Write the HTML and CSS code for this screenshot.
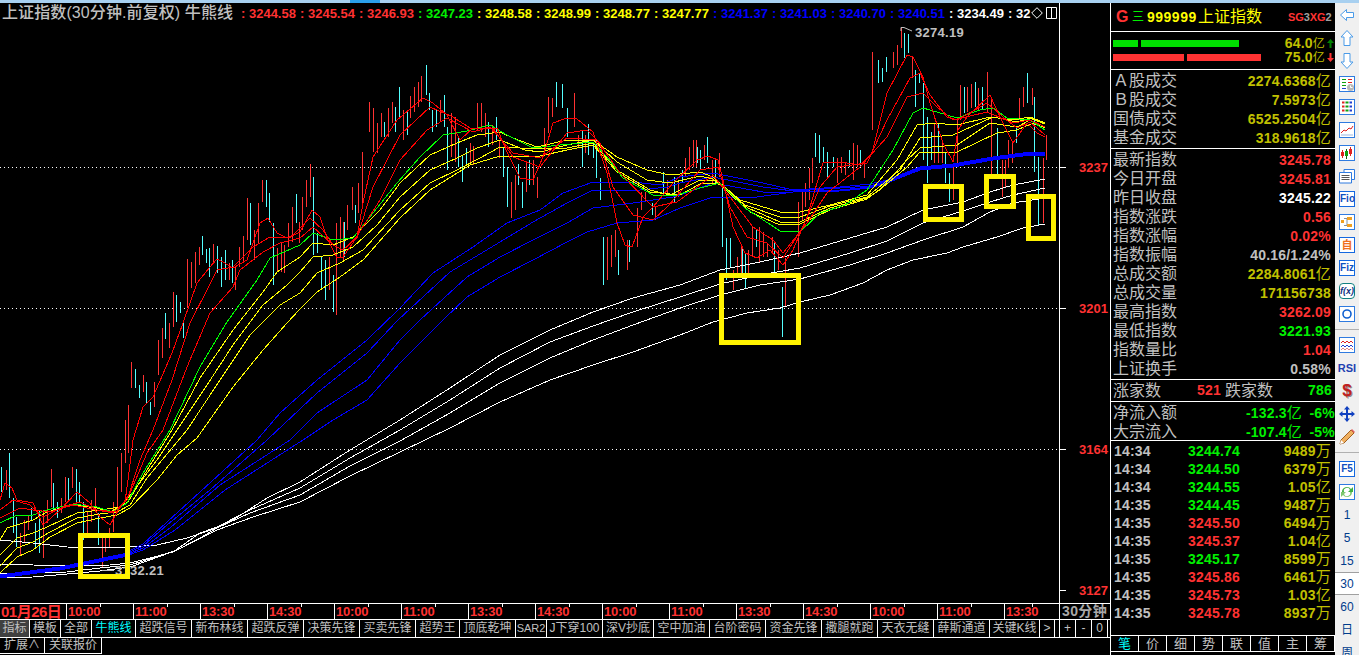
FILE: index.html
```html
<!DOCTYPE HTML>
<html>
    <head>
        <title>上证指数 牛熊线</title>
        <link rel="stylesheet" href="styles.css">
    </head>
    <body>
        <div class="strip"><i></i></div>
        <div class="main">
            <section class="chart">
                <div class="chart-body">
                    <div class="plot">
                        <div class="legend">
                            <span class="title">上证指数(30分钟.前复权) 牛熊线</span>
                            <span class="val red">: 3244.58</span>
                            <span class="val red">: 3245.54</span>
                            <span class="val red">: 3246.93</span>
                            <span class="val green">: 3247.23</span>
                            <span class="val yellow">: 3248.58</span>
                            <span class="val yellow">: 3248.99</span>
                            <span class="val yellow">: 3248.77</span>
                            <span class="val yellow">: 3247.77</span>
                            <span class="val blue">: 3241.37</span>
                            <span class="val blue">: 3241.03</span>
                            <span class="val blue">: 3240.70</span>
                            <span class="val blue">: 3240.51</span>
                            <span class="val white">: 3234.49</span>
                            <span class="val-end white">: 32</span>
                            <svg class="legend-icon" width="12" height="12" viewBox="0 0 12 12"><path d="M6 .7L11.3 6 6 11.3.7 6Z" fill="none" stroke="#fff"/></svg>
                            <svg class="legend-icon" width="11" height="12" viewBox="0 0 11 12"><path d="M.5.5H10.5V11.5H.5ZM5.5.5V11.5" fill="none" stroke="#fff"/></svg>
                        </div>
                        <svg class="canvas" width="1059" height="580" viewBox="0 23 1059 580">
                            <path class="dots" d="M0 167.5H1059M0 308.5H1059M0 449.5H1059"/>
                            <g transform="translate(.5 0)">
                                <path class="bar-red" d="M6 470V490M20 533V556M24 520V542M28 515V530M43 510V558M47 500V523M51 469V507M61 498V513M65 477V502M72 467V488M87 512V533M91 500V522M95 488V510M102 538V568M105 538V552M109 528V548M113 502V532M117 467V510M121 453V492M125 420V463M128 405V453M131 362V388M143 375V392M154 382V407M158 340V375M162 328V358M169 323V348M173 292V327M187 259V308M191 262V288M195 252V283M199 247V265M213 244V263M229 263V280M235 267V290M239 247V267M243 236V263M247 198V240M254 230V260M258 203V243M262 180V202M277 248V272M281 243V272M284 245V273M288 223V247M292 207V242M299 222V243M302 197V230M306 180V207M310 164V197M329 257V290M336 223V315M340 217V258M343 222V260M347 205V230M352 187V210M358 183V213M362 152V203M369 102V132M373 108V152M377 123V153M381 113V137M388 108V137M392 102V123M403 110V140M410 96V118M414 87V112M418 82V107M421 76V102M440 100V122M451 113V157M455 117V162M470 143V162M473 146V165M477 103V130M481 103V132M485 113V137M492 125V145M499 140V158M511 182V218M515 175V210M526 163V192M533 160V185M537 177V198M544 128V153M548 97V133M552 98V117M574 93V127M578 135V147M585 135V153M607 237V280M611 235V267M615 230V257M627 240V270M637 208V247M641 192V210M645 192V202M655 207V220M667 180V193M678 180V197M685 158V177M689 147V170M693 140V167M696 140V167M704 145V160M712 160V183M719 153V177M733 270V290M737 257V277M741 247V273M748 250V273M752 226V257M759 227V263M763 232V257M767 243V257M772 237V253M778 250V270M785 258V307M798 202V257M802 192V220M805 183V207M809 168V200M812 158V183M837 158V183M841 157V173M845 163V175M853 143V180M857 145V167M864 163V178M872 52V130M893 52V68M897 45V65M901 27V48M912 57V78M934 123V163M938 123V163M942 143V163M953 167V200M957 117V167M960 85V120M967 87V112M971 84V108M978 88V110M987 72V112M991 98V175M1002 160V197M1005 160V188M1008 140V168M1012 143V163M1019 98V120M1023 87V107M1032 88V105M1043 158V223M1046 135V160"/>
                                <path class="bar-cyan" d="M1 467V492M9 453V498M13 498V533M16 517V547M31 508V520M35 523V547M39 510V553M53 483V512M57 502V518M68 478V502M76 469V502M79 482V503M83 502V540M98 513V545M135 369V388M139 385V398M146 382V403M150 402V415M165 313V339M176 295V322M180 302V313M183 320V338M202 236V255M206 249V263M209 248V277M217 246V273M221 257V287M225 250V280M232 260V283M250 203V245M266 180V207M269 193V222M273 223V285M296 194V223M313 177V255M317 233V253M321 257V290M325 260V300M333 275V312M344 222V257M355 205V223M384 122V137M395 107V132M399 87V117M407 110V135M426 65V95M429 93V110M432 110V132M436 110V127M444 95V127M447 127V170M458 137V167M462 155V182M466 148V165M488 122V147M496 117V140M503 147V177M507 167V207M518 164V185M522 182V208M529 160V185M556 82V107M562 84V108M567 108V137M582 130V167M588 124V155M593 143V158M596 140V178M600 178V200M603 237V285M618 250V275M629 240V262M652 203V215M663 172V193M674 177V203M682 170V183M697 147V163M700 150V170M707 137V163M715 160V183M722 185V247M726 238V280M730 238V267M742 247V277M745 253V288M756 230V247M774 243V273M782 287V337M815 133V157M819 135V163M823 147V163M827 152V177M833 157V167M849 150V167M860 150V167M878 60V83M882 68V82M886 57V72M904 33V58M908 34V53M915 70V107M919 73V83M923 83V160M927 117V183M931 132V160M938 123V153M945 153V183M949 173V202M964 87V113M975 82V107M982 87V110M997 128V175M1016 127V143M1027 73V103M1034 97V172M1038 157V225"/>
                            </g>
                            <polyline class="ln ln-white" points="0,540 33,543 67,547 110,548 130,547 157,545 187,538 217,528 233,520 267,498 300,482 350,450 400,420 450,388 500,355 550,330 593,312 633,298 680,285 720,270 760,262 800,253 850,238 887,227 923,210 963,202 990,192 1013,185 1045,179"/>
                            <polyline class="ln ln-white" points="0,564 33,565 67,566 110,565 130,563 150,558 173,552 200,533 217,527 250,510 300,488 350,458 400,430 450,400 500,368 550,342 593,326 633,312 680,297 720,284 760,275 800,268 850,253 887,241 923,223 963,211 990,202 1013,195 1045,188"/>
                            <polyline class="ln ln-white" points="0,574 33,573 67,572 100,568 130,565 153,558 177,550 200,538 217,528 250,513 300,495 350,466 400,441 450,413 500,383 550,358 593,340 633,325 680,308 720,295 760,285 800,279 850,265 887,253 923,240 963,227 990,212 1013,203 1045,198"/>
                            <polyline class="ln ln-white" points="0,578 33,577 67,574 100,571 130,567 150,560 177,550 217,530 253,517 300,502 350,476 400,452 450,428 500,402 550,380 593,365 633,352 680,335 713,322 747,313 780,308 800,302 830,295 863,283 887,270 913,260 947,253 963,247 997,237 1023,228 1045,224"/>
                            <polyline class="ln ln-blue" points="0,575 60,567 123,554 143,544 167,522 200,492 257,440 280,413 317,380 367,340 400,308 433,273 473,247 507,223 540,210 563,193 593,182 633,182 660,185 680,177 713,173 763,183 793,190 840,187 870,184 887,180 920,167 953,164 993,157 1030,152 1045,152"/>
                            <polyline class="ln ln-blue" points="0,576 60,568 123,555 143,546 167,525 210,490 267,440 317,393 367,353 398,320 450,272 500,242 533,222 567,203 593,190 640,190 667,187 680,183 713,177 763,187 793,191 840,188 870,186 887,181 920,168 953,165 993,158 1030,153 1045,153"/>
                            <polyline class="ln ln-blue" points="0,577 60,569 123,556 143,548 170,528 220,485 290,440 317,413 367,380 400,340 420,320 467,277 500,257 533,240 567,223 593,208 633,203 673,197 680,195 713,183 763,192 793,192 840,190 870,187 887,182 920,169 953,166 993,159 1030,154 1045,154"/>
                            <polyline class="ln ln-blue" points="0,578 60,570 123,557 143,550 175,530 225,490 303,440 333,420 367,400 400,363 443,320 467,297 500,277 533,260 567,242 587,232 617,223 653,220 680,208 713,197 757,197 793,192 840,191 870,188 887,183 920,170 953,167 993,160 1030,155 1045,155"/>
                            <polyline class="ln ln-yellow" points="0,573 17,557 33,550 50,537 77,523 100,518 117,515 130,508 157,480 177,455 197,438 233,387 263,350 287,323 300,309 317,292 340,277 363,260 400,218 430,190 470,165 500,156 540,156 567,150 593,145 617,172 650,192 680,195 700,184 718,183 750,212 780,225 800,224 830,210 867,199 883,187 907,167 920,152 957,152 997,133 1017,130 1033,123 1045,128"/>
                            <polyline class="ln ln-yellow" points="0,566 17,548 33,542 50,532 77,518 100,514 117,512 130,505 147,478 187,430 220,380 250,335 280,305 300,293 317,273 340,263 363,250 400,210 430,183 457,170 480,158 500,147 540,149 567,148 593,143 617,170 650,190 670,195 700,180 715,181 748,208 780,222 800,222 830,208 867,198 880,190 907,160 920,148 957,145 990,123 1017,127 1030,120 1045,127"/>
                            <polyline class="ln ln-yellow" points="0,555 17,538 33,533 47,527 77,513 100,510 120,507 133,492 157,460 177,430 207,385 233,345 263,305 287,285 300,272 313,257 333,255 353,247 377,225 400,197 430,170 457,158 477,148 500,140 525,150 540,152 567,145 593,140 617,162 647,180 670,183 700,176 713,179 745,205 780,217 800,217 830,206 867,197 900,170 920,138 953,135 993,117 1017,122 1030,118 1045,124"/>
                            <polyline class="ln ln-yellow" points="0,540 7,528 33,520 47,512 73,505 97,508 110,512 128,502 147,470 172,430 200,378 233,330 263,292 277,272 300,257 313,243 333,245 353,237 380,210 400,183 430,155 457,143 477,135 500,132 513,138 537,147 567,140 593,140 617,157 647,170 670,175 700,172 713,177 740,200 780,212 800,212 830,205 867,195 897,160 917,125 933,123 957,125 990,117 1013,120 1030,117 1045,123"/>
                            <polyline class="ln ln-green" points="0,523 17,515 33,515 47,510 73,504 97,507 113,512 127,503 143,473 170,430 200,367 227,322 257,280 270,258 300,245 313,233 333,240 353,238 373,213 397,183 420,157 443,135 467,131 490,125 507,135 533,148 560,145 593,142 607,157 623,178 653,195 677,195 700,188 720,183 745,208 780,231 800,232 820,213 845,205 867,190 893,150 913,113 923,108 947,115 957,118 980,110 993,108 1007,118 1030,120 1045,130"/>
                            <polyline class="ln ln-red" points="0,518 20,508 33,510 50,512 73,505 97,510 117,512 130,493 147,453 163,430 187,367 210,313 233,287 240,270 263,252 280,243 300,238 313,227 333,245 343,250 357,236 380,200 400,160 427,130 447,118 473,132 490,127 513,153 540,158 567,138 597,140 620,173 653,207 677,202 700,185 713,175 730,197 753,227 773,240 783,253 807,223 827,193 860,167 887,137 907,97 923,93 937,107 953,120 987,112 1013,123 1030,120 1045,127"/>
                            <polyline class="ln ln-red" points="0,510 13,500 30,505 43,517 63,507 80,502 97,510 113,513 127,500 140,460 153,430 172,380 190,323 207,290 217,270 233,267 253,247 270,237 290,238 310,218 323,230 333,245 343,250 357,238 373,187 400,135 430,107 453,117 470,128 493,128 513,157 540,167 567,133 587,130 600,143 613,187 633,215 653,220 667,207 700,170 718,167 730,207 747,237 767,243 783,258 803,227 820,187 837,167 867,163 887,120 910,78 920,73 930,95 947,117 957,120 987,103 1003,117 1017,128 1030,122 1045,135"/>
                            <polyline class="ln ln-red" points="0,500 5,483 12,488 17,500 33,503 43,525 60,510 77,492 90,503 100,517 110,525 120,507 125,502 128,480 133,440 143,407 153,397 172,353 183,323 197,283 210,267 217,259 223,262 233,268 247,260 260,223 268,218 277,233 287,238 300,232 312,210 320,217 327,238 337,258 343,257 357,237 363,203 373,157 397,120 423,98 433,103 447,115 460,140 473,128 497,128 507,152 520,178 533,180 543,157 553,123 567,118 577,119 593,132 607,173 617,223 625,245 632,247 643,217 653,207 673,183 697,160 708,156 718,160 723,180 733,227 745,253 757,258 770,250 783,265 793,250 807,217 823,163 840,162 860,165 872,153 887,93 907,55 913,57 923,77 930,103 943,143 953,162 958,130 967,117 990,95 1000,117 1013,143 1027,123 1037,133 1045,137"/>
                            <path class="note-mark" d="M901 31V27.5H904L912 31M102 570.5H114"/>
                            <text class="note" x="915" y="37">3274.19</text>
                            <text class="note" x="115" y="575">3132.21</text>
                            <rect class="mark" x="80.5" y="535.5" width="47" height="41"/>
                            <rect class="mark" x="721.5" y="275.5" width="77" height="67"/>
                            <rect class="mark" x="925.5" y="186.5" width="36" height="33"/>
                            <rect class="mark" x="986.5" y="176.5" width="27" height="30"/>
                            <rect class="mark" x="1028.5" y="196.5" width="25" height="42"/>
                        </svg>
                    </div>
                    <svg class="axis" width="50" height="600" viewBox="0 3 50 600">
                        <path class="axis-tick" d="M0 167.5H6M0 308.5H6M0 449.5H6M0 590.5H6"/>
                        <text class="axis-label" x="48" y="172">3237</text>
                        <text class="axis-label" x="48" y="313">3201</text>
                        <text class="axis-label" x="48" y="454">3164</text>
                        <text class="axis-label" x="48" y="595">3127</text>
                    </svg>
                </div>
                <div class="time-row">
                    <div class="times">
                        <span class="date">01月26日</span>
                        <span>10:00</span><span>11:00</span><span>13:30</span><span>14:30</span>
                        <span>10:00</span><span>11:00</span><span>13:30</span><span>14:30</span>
                        <span>10:00</span><span>11:00</span><span>13:30</span><span>14:30</span>
                        <span>10:00</span><span>11:00</span><span>13:30</span>
                    </div>
                    <div class="period">30分钟</div>
                </div>
                <div class="btn-row">
                    <span class="on">指标</span><span>模板</span><span>全部</span><span class="cur">牛熊线</span><span>超跌信号</span><span>新布林线</span><span>超跌反弹</span><span>决策先锋</span><span>买卖先锋</span><span>超势王</span><span>顶底乾坤</span><span class="small">SAR2</span><span>J下穿100</span><span>深V抄底</span><span>空中加油</span><span>台阶密码</span><span>资金先锋</span><span>撒腿就跑</span><span>天衣无缝</span><span>薛斯通道</span><span>关键K线</span><span>&gt;</span><span class="gap"></span><span>+</span><span>-</span><span>0</span>
                </div>
                <div class="btn-row2">
                    <span>扩展∧</span><span>关联报价</span>
                </div>
            </section>

            <aside class="panel">
                <div class="head">
                    <span class="g">G</span>
                    <span class="tri">三</span>
                    <span class="code">999999</span>
                    <span class="name">上证指数</span>
                    <span class="tag">SG<i>3</i>XG<i>2</i></span>
                </div>
                <div class="flows">
                    <div class="flow">
                        <div class="bars"><b class="bar-g" style="width:25px"></b><b class="bar-g" style="width:98px"></b></div>
                        <span class="num olive">64.0<u>亿</u></span>
                        <svg class="flow-arrow" width="9" height="11" viewBox="0 0 9 11"><path d="M4.5 1L8 5H5.5V10H3.5V5H1Z" fill="#008000"/></svg>
                    </div>
                    <div class="flow">
                        <div class="bars"><b class="bar-r" style="width:71px"></b><b class="bar-r" style="width:74px"></b></div>
                        <span class="num olive">75.0<u>亿</u></span>
                        <svg class="flow-arrow" width="9" height="11" viewBox="0 0 9 11"><path d="M4.5 10L8 6H5.5V1H3.5V6H1Z" fill="#ff3232"/></svg>
                    </div>
                </div>
                <div class="rows rows-a">
                    <div class="row"><span>Ａ股成交</span><span class="num olive">2274.6368<u>亿</u></span></div>
                    <div class="row"><span>Ｂ股成交</span><span class="num olive">7.5973<u>亿</u></span></div>
                    <div class="row"><span>国债成交</span><span class="num olive">6525.2504<u>亿</u></span></div>
                    <div class="row"><span>基金成交</span><span class="num olive">318.9618<u>亿</u></span></div>
                </div>
                <div class="rows rows-b">
                    <div class="row"><span>最新指数</span><span class="num red">3245.78</span></div>
                    <div class="row"><span>今日开盘</span><span class="num red">3245.81</span></div>
                    <div class="row"><span>昨日收盘</span><span class="num white">3245.22</span></div>
                    <div class="row"><span>指数涨跌</span><span class="num red">0.56</span></div>
                    <div class="row"><span>指数涨幅</span><span class="num red">0.02%</span></div>
                    <div class="row"><span>指数振幅</span><span class="num gray">40.16/1.24%</span></div>
                    <div class="row"><span>总成交额</span><span class="num olive">2284.8061<u>亿</u></span></div>
                    <div class="row"><span>总成交量</span><span class="num olive">171156738</span></div>
                    <div class="row"><span>最高指数</span><span class="num red">3262.09</span></div>
                    <div class="row"><span>最低指数</span><span class="num green">3221.93</span></div>
                    <div class="row"><span>指数量比</span><span class="num red">1.04</span></div>
                    <div class="row"><span>上证换手</span><span class="num gray">0.58%</span></div>
                </div>
                <div class="updown">
                    <span class="ud-a">涨家数</span><span class="num red ud-b">521</span><span class="ud-c">跌家数</span><span class="num green ud-d">786</span>
                </div>
                <div class="rows rows-c">
                    <div class="row"><span>净流入额</span><span class="num green">-132.3<u>亿</u></span><span class="num green pct">-6%</span></div>
                    <div class="row"><span>大宗流入</span><span class="num green">-107.4<u>亿</u></span><span class="num green pct">-5%</span></div>
                </div>
                <div class="trades">
                    <div class="trade"><span class="num gray">14:34</span><span class="num green">3244.74</span><span class="num olive">9489<u>万</u></span></div>
                    <div class="trade"><span class="num gray">14:34</span><span class="num green">3244.50</span><span class="num olive">6379<u>万</u></span></div>
                    <div class="trade"><span class="num gray">14:34</span><span class="num green">3244.55</span><span class="num olive">1.05<u>亿</u></span></div>
                    <div class="trade"><span class="num gray">14:35</span><span class="num green">3244.45</span><span class="num olive">9487<u>万</u></span></div>
                    <div class="trade"><span class="num gray">14:35</span><span class="num red">3245.50</span><span class="num olive">6494<u>万</u></span></div>
                    <div class="trade"><span class="num gray">14:35</span><span class="num red">3245.37</span><span class="num olive">1.04<u>亿</u></span></div>
                    <div class="trade"><span class="num gray">14:35</span><span class="num green">3245.17</span><span class="num olive">8599<u>万</u></span></div>
                    <div class="trade"><span class="num gray">14:35</span><span class="num red">3245.86</span><span class="num olive">6461<u>万</u></span></div>
                    <div class="trade"><span class="num gray">14:35</span><span class="num red">3245.73</span><span class="num olive">1.03<u>亿</u></span></div>
                    <div class="trade"><span class="num gray">14:35</span><span class="num red">3245.78</span><span class="num olive">8937<u>万</u></span></div>
                </div>
                <div class="tabs">
                    <span class="cur">笔</span><span>价</span><span>细</span><span>势</span><span>联</span><span>值</span><span>主</span><span>筹</span>
                </div>
            </aside>

            <nav class="tools">
                <div class="tool"><svg width="16" height="16" viewBox="0 0 16 16"><path class="arrow" d="M1.5 8L7.5 2.5V5.5H14.5V10.5H7.5V13.5Z"/></svg></div>
                <div class="tool"><svg width="16" height="18" viewBox="0 0 16 18"><path class="arrow" d="M8 1.5L14 8H11V16.5H5V8H2Z"/></svg></div>
                <div class="tool"><svg width="16" height="18" viewBox="0 0 16 18"><path class="arrow" d="M8 16.5L14 10H11V1.5H5V10H2Z"/></svg></div>
                <div class="tool"><svg width="16" height="16" viewBox="0 0 16 16"><rect class="box" x=".5" y=".5" width="15" height="15"/><path d="M3 3.5H7M3 6.5H7M3 9.5H7" stroke="#10a010"/><path d="M9 3.5H13M9 6.5H13" stroke="#e02020"/><path d="M3 12.5H7" stroke="#2040d0"/><circle cx="11.5" cy="11.5" r="3.5" fill="#b8b8b8"/><path d="M11.5 9.5V11.5H13.5" stroke="#fff" fill="none"/></svg></div>
                <div class="tool"><svg width="16" height="16" viewBox="0 0 16 16"><rect class="box" x=".5" y=".5" width="15" height="15"/><path d="M3 3.5H5.5M3 7.5H5.5M3 11.5H5.5" stroke="#e02020" stroke-width="2"/><path d="M6.5 3.5H9.5M6.5 7.5H9.5M6.5 11.5H9.5" stroke="#10a010" stroke-width="2"/><path d="M10.5 3.5H13M10.5 7.5H13M10.5 11.5H13" stroke="#2040d0" stroke-width="2"/></svg></div>
                <div class="tool"><svg width="16" height="16" viewBox="0 0 16 16"><rect class="box" x=".5" y=".5" width="15" height="15"/><path d="M2 11L5 8L7 9L10 6L12 7L14 4" fill="none" stroke="#e02020"/><path d="M2 13H14" stroke="#9cb8e0"/></svg></div>
                <div class="tool"><svg width="16" height="16" viewBox="0 0 16 16"><rect class="box" x=".5" y=".5" width="15" height="15"/><path d="M3.5 5V13M11.5 2V11" stroke="#e02020"/><path d="M7.5 4V14" stroke="#106010"/><rect x="2" y="7" width="3" height="4" fill="#e02020"/><rect x="6" y="6" width="3" height="5" fill="#10a010"/><rect x="10" y="4" width="3" height="5" fill="#e02020"/></svg></div>
                <div class="tool"><svg width="16" height="16" viewBox="0 0 16 16"><path d="M5 1.5H15.5V11.5H5Z" fill="#fff" stroke="#2f7be0"/><path d="M.5 4.5H12.5V15H.5Z" fill="#fff" stroke="#2f7be0"/><path d="M2.5 7.5H10.5M2.5 9.5H10.5M2.5 11.5H10.5" stroke="#555"/></svg></div>
                <div class="tool"><span class="tbox">Fio</span></div>
                <div class="tool"><svg width="16" height="16" viewBox="0 0 16 16"><rect class="box" x=".5" y=".5" width="15" height="15"/><path d="M5 4.5H8V11.5H5" fill="none" stroke="#8090a0"/><rect x="8" y="3" width="5" height="3" fill="#f0a020"/><rect x="8" y="10" width="5" height="3" fill="#f0a020"/><rect x="2" y="6" width="3" height="3" fill="#f0a020"/></svg></div>
                <div class="tool"><span class="tbox tbox-cn">自</span></div>
                <div class="tool"><span class="tbox">Fiz</span></div>
                <div class="tool"><span class="tbox tbox-fx"><i>f(x)</i></span></div>
                <div class="tool"><svg width="16" height="16" viewBox="0 0 16 16"><rect class="box" x=".5" y=".5" width="15" height="15"/><circle cx="8" cy="8" r="4" fill="#fff" stroke="#1060d0" stroke-width="1.6"/></svg></div>
                <div class="tool-sep"><hr></div>
                <div class="tool"><svg width="16" height="16" viewBox="0 0 16 16"><rect class="box" x=".5" y=".5" width="15" height="15"/><path d="M2 6L4 4L6 6L8 4L10 6L12 4L14 6" fill="none" stroke="#e02020"/><path d="M2 10L4 8L6 10L8 8L10 10L12 8L14 10" fill="none" stroke="#2040d0"/><path d="M2 13L4 11L6 13L8 11L10 13L12 11L14 13" fill="none" stroke="#e08080"/></svg></div>
                <div class="tool"><span class="rsi">RSI</span></div>
                <div class="tool"><span class="dollar">$</span></div>
                <div class="tool"><svg width="16" height="16" viewBox="0 0 16 16"><path d="M8 0L11 3.5H9V7H12.5V5L16 8L12.5 11V9H9V12.5H11L8 16L5 12.5H7V9H3.5V11L0 8L3.5 5V7H7V3.5H5Z" fill="#1040c0"/></svg></div>
                <div class="tool"><svg width="18" height="18" viewBox="0 0 18 18"><path d="M3 12L13 2L16 5L6 15L2 16Z" fill="#f0b060" stroke="#a06020"/><path d="M13 2L16 5L17 4L14 1Z" fill="#e06060"/><path d="M2 16L3 12L6 15Z" fill="#fff"/></svg></div>
                <div class="tool-sep tool-sep-b"><hr></div>
                <div class="tool"><span class="tbox">F5</span></div>
                <div class="tool"><svg width="16" height="16" viewBox="0 0 16 16"><rect class="box" x=".5" y=".5" width="15" height="15"/><path d="M3 8A5 5 0 0 1 12 5L14 3V8H9L11 6A3 3 0 0 0 5 8Z" fill="#40b040"/><path d="M13 8A5 5 0 0 1 4 11L2 13V8H7L5 10A3 3 0 0 0 11 8Z" fill="#80c870"/></svg></div>
                <div class="tool period-btn">1</div>
                <div class="tool period-btn">5</div>
                <div class="tool period-btn">15</div>
                <div class="tool period-btn active">30</div>
                <div class="tool period-btn">60</div>
                <div class="tool period-btn">日</div>
                <div class="tool period-btn">周</div>
            </nav>
        </div>
    </body>
</html>
```

FILE: styles.css
```css
html, body {
    margin: 0;
    height: 655px;
    overflow: hidden;
    background: #000;
}

body {
    font-family: "Liberation Sans", "Noto Sans CJK SC", sans-serif;
    color: #c0c0c0;
}

.strip {
    display: flex;
    height: 3px;
    padding-left: 350px;
    background: #a8d0f0;
}

.strip i {
    width: 30px;
    background: #2aa0ea;
}

.main {
    display: flex;
    height: 652px;
}

.red { color: #ff3232; }
.green { color: #00f000; }
.yellow { color: #ffff00; }
.blue { color: #0000ff; }
.white { color: #fff; }
.gray { color: #c0c0c0; }
.olive { color: #c0c000; }

/* chart column */
.chart {
    width: 1110px;
    border-right: 1px solid #fff;
    flex: none;
}

.chart-body {
    display: flex;
    height: 600px;
}

.plot {
    width: 1059px;
    flex: none;
}

.legend {
    display: flex;
    align-items: center;
    height: 20px;
    padding-left: 2px;
    white-space: nowrap;
    font: bold 13px "Liberation Sans", sans-serif;
}

.legend .title {
    width: 239px;
    flex: none;
    font: 500 16px/20px "Liberation Sans", "Noto Sans CJK SC", sans-serif;
    letter-spacing: .1px;
    color: #c0c0c0;
}

.val {
    width: 59px;
    flex: none;
}

.val-end {
    width: 23px;
    flex: none;
}

.legend-icon {
    flex: none;
    margin-right: 3px;
}

.canvas, .axis {
    display: block;
}

.axis {
    flex: none;
    border-left: 1px solid #fff;
}

.dots {
    stroke: #fff;
    stroke-dasharray: 1 3;
    shape-rendering: crispEdges;
}

.bar-red, .bar-cyan {
    fill: none;
    shape-rendering: crispEdges;
}

.bar-red { stroke: #ff3232; }
.bar-cyan { stroke: #54ffff; }

.ln {
    fill: none;
    shape-rendering: crispEdges;
}

.ln-white { stroke: #fff; }
.ln-blue { stroke: #0000ff; }
.ln-yellow { stroke: #ffff00; }
.ln-green { stroke: #00ff00; }
.ln-red { stroke: #ff0000; }

.note {
    font: bold 13px "Liberation Sans", sans-serif;
    letter-spacing: .3px;
    fill: #c0c0c0;
}

.note-mark {
    fill: none;
    stroke: #c0c0c0;
}

.mark {
    fill: none;
    stroke: #fff200;
    stroke-width: 5;
}

.axis-tick {
    stroke: #fff;
    shape-rendering: crispEdges;
}

.axis-label {
    font: bold 13px "Liberation Sans", sans-serif;
    text-anchor: end;
    fill: #ff3232;
}

/* time axis */
.time-row {
    display: flex;
    height: 15px;
    border-top: 1px solid #fff;
    border-bottom: 1px solid #fff;
}

.times {
    display: grid;
    grid-template-columns: repeat(15, 67px) 54px;
    width: 1059px;
    flex: none;
    font: bold 13px/15px "Liberation Sans", sans-serif;
    letter-spacing: -.2px;
    color: #ff3232;
}

.times span {
    position: relative;
    box-sizing: border-box;
    padding-left: 1px;
    border-right: 1px solid #fff;
}

.times span::after {
    content: "";
    position: absolute;
    left: 50%;
    top: 0;
    width: 1px;
    height: 3px;
    background: #fff;
}

.times .date {
    font: bold 15px/15px "Liberation Sans", "Noto Sans CJK SC", sans-serif;
    letter-spacing: -.5px;
}

.times .date::after {
    display: none;
}

.times span:last-child {
    border-right: 0;
}

.period {
    flex: 1;
    padding-left: 2px;
    border-left: 1px solid #fff;
    font: bold 14px/15px "Liberation Sans", "Noto Sans CJK SC", sans-serif;
    letter-spacing: .4px;
    color: #a8a8a8;
}

/* indicator buttons */
.btn-row {
    display: grid;
    grid-template-columns: 30px 31px 31px 44px 56px 56px 56px 56px 56px 44px 56px 31px 56px 51px 56px 56px 56px 56px 56px 56px 50px 15px 5px 16px 16px 16px;
    height: 17px;
    border-bottom: 1px solid #fff;
    font-size: 12px;
    line-height: 16px;
    text-align: center;
    white-space: nowrap;
}

.btn-row span {
    box-sizing: border-box;
    border-right: 1px solid #fff;
    overflow: hidden;
}

.btn-row .on {
    background: #404040;
}

.btn-row .cur, .tabs .cur {
    color: #00ffff;
}

.btn-row .small {
    font: 11px/16px "Liberation Sans", sans-serif;
}

.btn-row2 {
    display: flex;
    height: 16px;
    font-size: 12px;
    line-height: 14px;
}

.btn-row2 span {
    padding: 0 4px;
    border-right: 1px solid #fff;
    border-bottom: 1px solid #fff;
}

/* quote panel */
.panel {
    display: flex;
    flex-direction: column;
    width: 224px;
    flex: none;
    font-size: 16px;
}

.num {
    font: bold 14px/16px "Liberation Sans", sans-serif;
    letter-spacing: .2px;
}

.num u {
    text-decoration: none;
    font: 400 15px/16px "Liberation Sans", "Noto Sans CJK SC", sans-serif;
}

.head {
    display: flex;
    align-items: center;
    height: 28px;
    padding-left: 5px;
    border-bottom: 1px solid #fff;
    white-space: nowrap;
}

.head .g {
    width: 16px;
    font: bold 16px/20px "Liberation Sans", sans-serif;
    color: #ff3232;
}

.head .tri {
    width: 15px;
    font-size: 12px;
    line-height: 20px;
    color: #00f000;
}

.head .code {
    width: 51px;
    font: bold 14px/20px "Liberation Sans", sans-serif;
    letter-spacing: .5px;
    color: #ffff00;
}

.head .name {
    width: 90px;
    line-height: 20px;
    color: #ffff00;
}

.head .tag {
    font: bold 11px/20px "Liberation Sans", sans-serif;
    letter-spacing: -.1px;
    color: #ff3232;
}

.head .tag i {
    font-style: normal;
    color: #a0a0a0;
}

.flows {
    height: 33px;
    padding: 4px 0 0 2px;
    border-bottom: 1px solid #fff;
}

.flow {
    display: flex;
    align-items: center;
    height: 14px;
}

.flow .num {
    line-height: 14px;
}

.flow .num u {
    font-size: 12px;
    line-height: 14px;
}

.bars {
    display: flex;
    gap: 3px;
    flex: 1;
}

.bars b {
    height: 7px;
}

.bar-g { background: #00e000; }
.bar-r { background: #ff3232; }

.flow-arrow {
    flex: none;
    margin-left: 1px;
}

.rows {
    padding: 1px 4px 0 2px;
    border-bottom: 1px solid #fff;
}

.rows-a { height: 77px; }
.rows-b { height: 229px; }
.rows-c { height: 37px; padding-right: 0; }

.row {
    display: flex;
    justify-content: space-between;
    align-items: center;
    height: 19px;
    line-height: 19px;
}

.row > span:first-child {
    flex: 1;
}

.row .pct {
    width: 33px;
    text-align: right;
}

.updown {
    display: flex;
    align-items: center;
    height: 20px;
    padding: 0 3px 1px 2px;
    border-bottom: 1px solid #fff;
    line-height: 19px;
}

.ud-a { width: 84px; }
.ud-b { width: 28px; }
.ud-d { flex: 1; text-align: right; }

.trades {
    height: 195px;
    box-sizing: border-box;
    padding: 1px 4px 0 3px;
    border-bottom: 1px solid #fff;
}

.trade {
    display: grid;
    grid-template-columns: 74px 1fr auto;
    align-items: center;
    height: 18px;
}

.tabs {
    display: grid;
    grid-template-columns: repeat(8, 1fr);
    height: 15px;
    border-bottom: 1px solid #fff;
    font-size: 13px;
    line-height: 15px;
    text-align: center;
}

.tabs span {
    border-right: 1px solid #fff;
}

/* right toolbar */
.tools {
    width: 24px;
    flex: none;
    background: #f0f0f0;
    color: #003c8c;
}

.tool {
    display: flex;
    justify-content: center;
    align-items: center;
    height: 23px;
}

.tool svg {
    display: block;
}

.tool-sep {
    display: flex;
    align-items: center;
    height: 8px;
}

.tool-sep-b {
    height: 9px;
}

.tool-sep hr {
    width: 100%;
    height: 1px;
    margin: 0;
    border: 0;
    background: #b0b0b0;
}

.arrow {
    fill: #fff;
    stroke: #4a9be8;
}

.box {
    fill: #fff;
    stroke: #2f7be0;
}

.tbox {
    display: block;
    box-sizing: border-box;
    width: 16px;
    height: 16px;
    border: 1px solid #1468e0;
    background: #fff;
    font: bold 10px/14px "Liberation Sans", sans-serif;
    text-align: center;
    color: #1050c0;
}

.tbox-cn {
    font: bold 11px/14px "Liberation Sans", "Noto Sans CJK SC", sans-serif;
    color: #f07020;
}

.tbox-fx {
    border-color: #108080;
    border-radius: 4px;
    font-size: 9px;
    color: #103080;
}

.rsi {
    font: bold 11px "Liberation Sans", sans-serif;
    color: #2040b0;
}

.dollar {
    font: bold 17px "Liberation Sans", sans-serif;
    color: #c02020;
    text-shadow: 1px 1px #909090;
}

.period-btn {
    font: 12px/16px "Liberation Sans", "Noto Sans CJK SC", sans-serif;
}

.period-btn.active {
    box-sizing: border-box;
    background: #fff;
    border-top: 1px solid #a0a0a0;
    border-bottom: 1px solid #a0a0a0;
}
```
